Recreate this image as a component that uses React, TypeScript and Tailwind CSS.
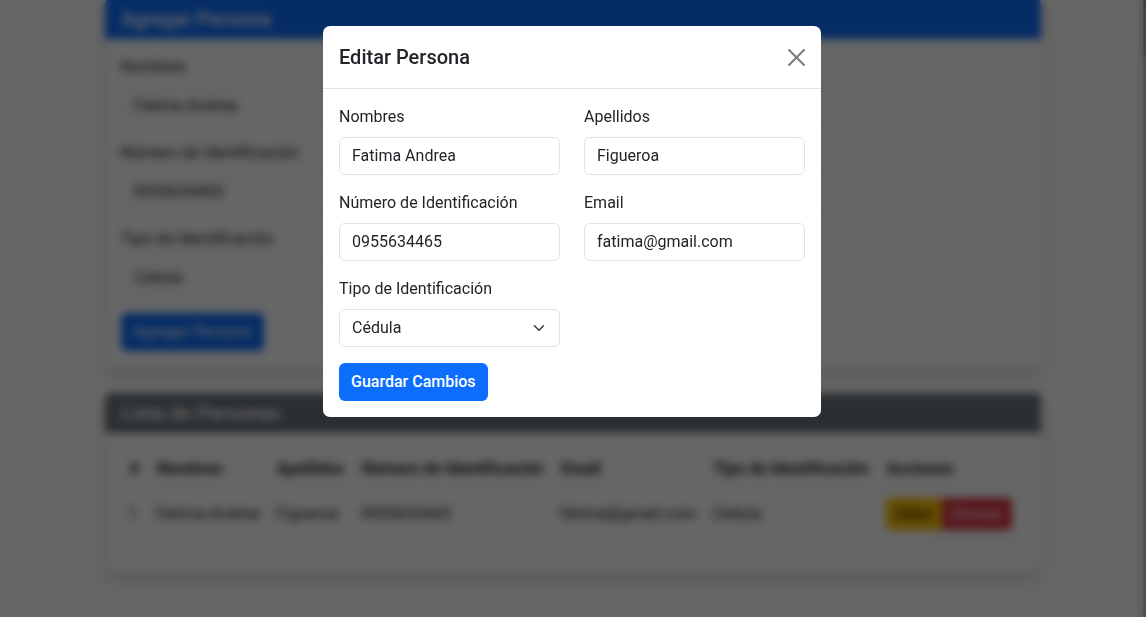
import React from 'react';

type Field = { label: string; value: string; select?: boolean };

const Chevron = () => (
  <svg width="16" height="12" viewBox="0 0 16 16" fill="none" className="shrink-0">
    <path d="m2 5 6 6 6-6" stroke="#343a40" strokeWidth="2" strokeLinecap="round" strokeLinejoin="round" />
  </svg>
);

function FormField({ label, value, select }: Field) {
  return (
    <div className="flex flex-col">
      <label className="mb-2 text-base leading-6 text-[#212529]">{label}</label>
      <div className="flex h-[38px] items-center justify-between rounded-[6px] border border-[#dee2e6] bg-white px-3 text-base text-[#212529]">
        <span>{value}</span>
        {select && <Chevron />}
      </div>
    </div>
  );
}

function PersonForm({ fields, button, wide }: { fields: Field[]; button: string; wide?: boolean }) {
  return (
    <div className="flex flex-col">
      <div className="grid grid-cols-2 gap-x-6 gap-y-4">
        {fields.map((f) => (
          <FormField key={f.label} {...f} />
        ))}
      </div>
      <div className="mt-4">
        <button
          className={
            wide
              ? 'h-[38px] rounded-[6px] bg-[#0d6efd] px-3 text-base text-white'
              : 'h-[38px] rounded-[6px] bg-[#0d6efd] px-3 text-base font-medium text-white'
          }
        >
          {button}
        </button>
      </div>
    </div>
  );
}

const fields: Field[] = [
  { label: 'Nombres', value: 'Fatima Andrea' },
  { label: 'Apellidos', value: 'Figueroa' },
  { label: 'Número de Identificación', value: '0955634465' },
  { label: 'Email', value: 'fatima@gmail.com' },
  { label: 'Tipo de Identificación', value: 'Cédula', select: true },
];

const columns = ['#', 'Nombres', 'Apellidos', 'Número de Identificación', 'Email', 'Tipo de Identificación', 'Acciones'];
const row = ['1', 'Fatima Andrea', 'Figueroa', '0955634465', 'fatima@gmail.com', 'Cédula'];

function PeopleTable() {
  return (
    <table className="border-collapse text-left text-base text-[#212529]">
      <thead>
        <tr>
          {columns.map((c) => (
            <th key={c} className="border-b border-[#dee2e6] px-[9px] py-2 font-bold leading-6">
              {c}
            </th>
          ))}
        </tr>
      </thead>
      <tbody>
        <tr>
          {row.map((v, i) => (
            <td key={i} className="border-b border-[#dee2e6] px-2 py-2 leading-6">
              {v}
            </td>
          ))}
          <td className="border-b border-[#dee2e6] px-2 py-2">
            <div className="flex">
              <button className="h-[32px] rounded-l-[4px] bg-[#ffc107] px-[10px] text-sm text-black">Editar</button>
              <button className="h-[32px] rounded-r-[4px] bg-[#dc3545] px-[10px] text-sm text-white">Eliminar</button>
            </div>
          </td>
        </tr>
      </tbody>
    </table>
  );
}

export default function App() {
  return (
    <div className="relative flex min-h-screen bg-white font-['Roboto',sans-serif]">
      <main className="flex-1">
        <div className="mx-auto mt-[-1px] w-[960px] pl-[13px] pr-[11px]">
          <section className="mb-[26px] overflow-hidden rounded-[6px] bg-white shadow-[0_8px_16px_rgba(0,0,0,0.15)]">
            <div className="bg-[#0d6efd] px-4 py-2">
              <h5 className="text-xl font-medium leading-6 text-white">Agregar Persona</h5>
            </div>
            <div className="p-4">
              <PersonForm fields={fields} button="Agregar Persona" wide />
            </div>
          </section>

          <section className="overflow-hidden rounded-[6px] bg-white shadow-[0_8px_16px_rgba(0,0,0,0.15)]">
            <div className="bg-[#6c757d] px-4 py-2">
              <h5 className="text-xl font-medium leading-6 text-white">Lista de Personas</h5>
            </div>
            <div className="p-4">
              <div className="mb-4">
                <PeopleTable />
              </div>
            </div>
          </section>
        </div>
      </main>
      <aside className="w-[3px] shrink-0 bg-[#aaaaaa]">
        <div className="h-[55px] bg-[#7f7f7f]" />
      </aside>

      <div className="fixed inset-0 z-40 flex justify-center bg-black/60 pr-[2px] pt-[26px] backdrop-blur-[4px]">
        <div className="h-fit w-[498px] overflow-hidden rounded-[7px] bg-white">
          <div className="flex items-center justify-between border-b border-[#dee2e6] p-4">
            <h5 className="text-xl font-medium leading-[30px] text-[#212529]">Editar Persona</h5>
            <button className="mr-[-4px] p-1 opacity-50" aria-label="Cerrar">
              <svg width="17" height="17" viewBox="0 0 16 16" fill="#000">
                <path d="M.293.293a1 1 0 0 1 1.414 0L8 6.586 14.293.293a1 1 0 1 1 1.414 1.414L9.414 8l6.293 6.293a1 1 0 0 1-1.414 1.414L8 9.414l-6.293 6.293a1 1 0 0 1-1.414-1.414L6.586 8 .293 1.707a1 1 0 0 1 0-1.414z" />
              </svg>
            </button>
          </div>
          <div className="p-4">
            <PersonForm fields={fields} button="Guardar Cambios" />
          </div>
        </div>
      </div>
    </div>
  );
}
